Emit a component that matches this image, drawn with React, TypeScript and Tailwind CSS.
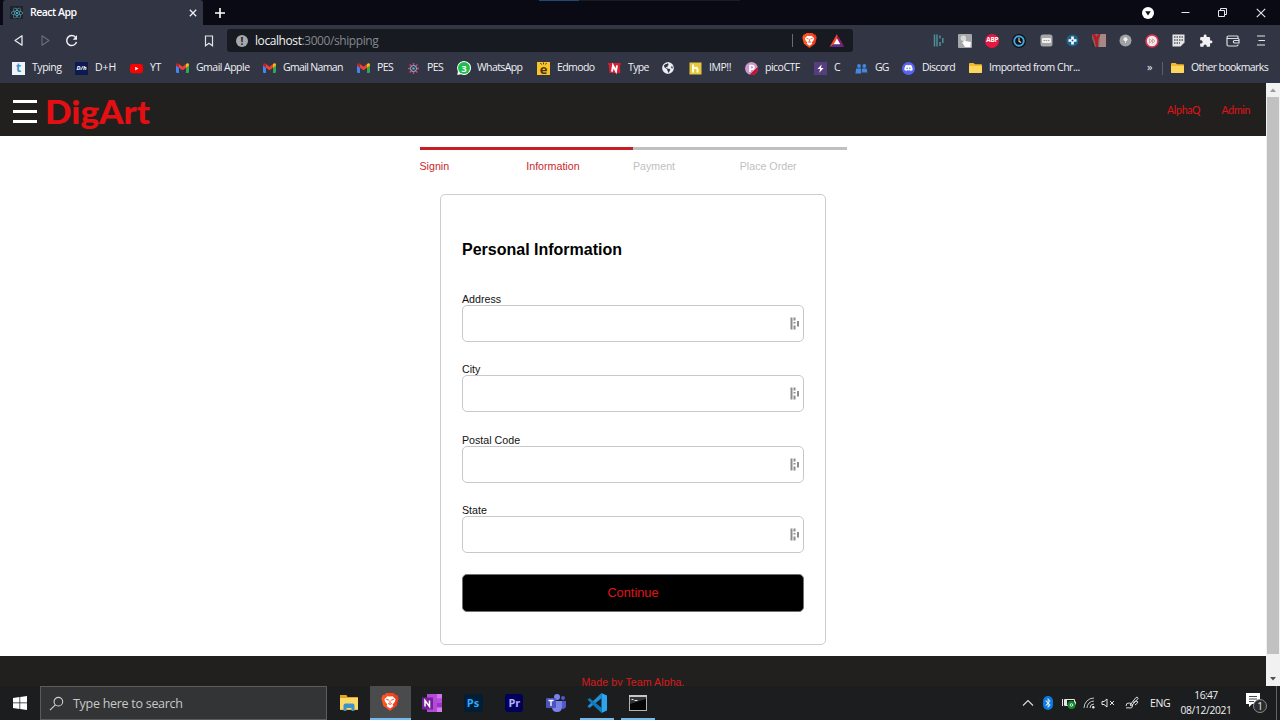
import React from 'react';
import { FaBluetoothB, FaDiscord, FaGlobeAmericas, FaReact } from 'react-icons/fa';

function BraveLogo({ className, gid }: { className: string; gid: string }) {
  return (
    <svg viewBox="0 0 24 24" className={className}>
      <defs>
        <linearGradient id={gid} x1="0" x2="1"><stop offset="0" stopColor="#ff5a22" /><stop offset="1" stopColor="#f0371b" /></linearGradient>
      </defs>
      <path d="M7 0h10l2.500 2.500 2-.3L23.500 7l-2.500 10-9 7L3 17 .5 7l2-4.800 2 .3z" fill={`url(#${gid})`} />
      <path d="M12 4.800l3.500-.6 4 4-1 3.300-3 3.700 1 2L12 20.500l-4.500-3.300 1-2-3-3.700-1-3.300 4-4z" fill="#fff" />
      <path d="M7 8.500l3.500 1.100M17 8.500l-3.500 1.100M12 10v4M9.500 14l2.500 1.200 2.500-1.200" stroke="#f0451f" strokeWidth="1.300" fill="none" />
    </svg>
  );
}

function Gmail() {
  return (
    <svg viewBox="0 0 24 18" className="h-[10px] w-[13px]">
      <path d="M0 3v13.500A1.500 1.500 0 0 0 1.500 18H5.500V8z" fill="#4285f4" />
      <path d="M24 3v13.500A1.500 1.500 0 0 1 22.500 18H18.500V8z" fill="#34a853" />
      <path d="M18.500 1.600V8.400L24 4.200V2.500c0-2-2.300-3.200-4-2z" fill="#fbbc04" />
      <path d="M5.500 8.400V1.600L12 6.500l6.500-4.900v6.800L12 13.200z" fill="#ea4335" />
      <path d="M0 2.500v1.700l5.500 4.200V1.600L4 .5C2.300-.7 0 .5 0 2.500z" fill="#c5221f" />
    </svg>
  );
}

function Folder() {
  return (
    <svg viewBox="0 0 13 12" className="h-[12px] w-[13px]">
      <path d="M0 2q0-1 1-1h3.500l1.500 1.300h6q1 0 1 1V10q0 1-1 1H1q-1 0-1-1z" fill="#f5b92c" />
      <path d="M0 4h13v6q0 1-1 1H1q-1 0-1-1z" fill="#ffd65c" />
    </svg>
  );
}

function Square({ className, children }: { className: string; children: React.ReactNode }) {
  return <span className={`flex h-[13px] w-[13px] items-center justify-center leading-none ${className}`}>{children}</span>;
}

type Mark = { w: string; label?: string; icon: React.ReactNode; t?: string };

const marks: Mark[] = [
  { w: 'w-[63px]', label: 'Typing', t: 'tracking-[-0.45px]', icon: <Square className="bg-[#eef4f8] text-[12px] font-bold text-[#3d94c9]">t</Square> },
  { w: 'w-[55px]', label: 'D+H', t: 'tracking-[-0.1px]', icon: <Square className="bg-[#0b1a52] text-[6px] font-bold italic text-white">D/h</Square> },
  {
    w: 'w-[46px]', label: 'YT', t: 'tracking-[-0.3px]', icon: (
      <svg viewBox="0 0 13 13" className="h-[13px] w-[13px]"><rect y="2" width="13" height="9.200" rx="2.400" fill="#f00" /><path d="M5.200 4.700v3.800l3.300-1.900z" fill="#fff" /></svg>
    ),
  },
  { w: 'w-[87px]', label: 'Gmail Apple', t: 'tracking-[-0.52px]', icon: <Gmail /> },
  { w: 'w-[94px]', label: 'Gmail Naman', t: 'tracking-[-0.66px]', icon: <Gmail /> },
  { w: 'w-[50px]', label: 'PES', t: 'tracking-[-0.6px]', icon: <Gmail /> },
  {
    w: 'w-[50px]', label: 'PES', t: 'tracking-[-0.6px]', icon: (
      <svg viewBox="0 0 13 13" className="h-[13px] w-[13px]">
        <path d="M6.500 1v11M1 6.500h11M2.600 2.600l7.800 7.800M10.400 2.600l-7.800 7.800" stroke="#c04a72" strokeWidth="1.400" />
        <circle cx="6.500" cy="6.500" r="3" fill="#27304a" stroke="#a9b9cb" /><circle cx="6.500" cy="6.500" r="1.300" fill="#6ba6c9" />
      </svg>
    ),
  },
  {
    w: 'w-[80px]', label: 'WhatsApp', t: 'tracking-[-0.6px]', icon: (
      <span className="relative flex h-[14px] w-[14px] items-center justify-center">
        <svg viewBox="0 0 14 14" className="h-[14px] w-[14px]"><path d="M7 0a7 7 0 1 1-3 13.300L.3 14l.6-3.700A7 7 0 0 1 7 0z" fill="#f4fff7" /><circle cx="7" cy="7" r="6" fill="#20bd4e" /></svg>
        <span className="absolute text-[9px] font-bold leading-none text-white">3</span>
      </span>
    ),
  },
  {
    w: 'w-[71px]', label: 'Edmodo', t: 'tracking-[-0.6px]', icon: (
      <span className="flex h-[13px] w-[13px] flex-col items-center bg-[#f9c32b] text-[#49360a]">
        <svg viewBox="0 0 13 3" className="h-[3px] w-[13px]"><path d="M3.500 1l1 1.500M6.500.5v1.800M9.500 1l-1 1.500" stroke="#49360a" /></svg>
        <span className="text-[13px] font-bold leading-[8px]">e</span>
      </span>
    ),
  },
  {
    w: 'w-[54px]', label: 'Type', t: 'tracking-[-0.65px]', icon: (
      <svg viewBox="0 0 13 13" className="h-[13px] w-[13px]"><path d="M0 1h13l-1 3 .3 7H1.500L1 5z" fill="#d61f32" /><path d="M4 9.700L5 3.500l3 5.700 1-5.900" stroke="#fff" strokeWidth="1.900" fill="none" /></svg>
    ),
  },
  { w: 'w-[27px]', icon: <FaGlobeAmericas className="h-[12px] w-[12px] text-[#eceef2]" /> },
  {
    w: 'w-[56px]', label: 'IMP!!', t: 'tracking-[-0.45px]', icon: (
      <svg viewBox="0 0 13 13" className="h-[13px] w-[13px]"><rect x=".5" y=".5" width="12" height="12" fill="#e6c83c" /><path d="M4 2.500v8M4 6.500q4.500-2 4.500 1v3" stroke="#fffbe0" strokeWidth="2" fill="none" /></svg>
    ),
  },
  {
    w: 'w-[69px]', label: 'picoCTF', t: 'tracking-[-0.5px]', icon: (
      <svg viewBox="0 0 13 13" className="h-[13px] w-[13px]"><circle cx="6.500" cy="6.500" r="6.500" fill="#c99acb" /><path d="M12.800 5A6.500 6.500 0 0 1 4.500 12.700z" fill="#c8102e" /><path d="M5 10V3.500h2a1.800 1.800 0 0 1 0 3.800H5" stroke="#fff" strokeWidth="1.600" fill="none" /></svg>
    ),
  },
  {
    w: 'w-[41px]', label: 'C', icon: (
      <svg viewBox="0 0 13 13" className="h-[13px] w-[13px]"><rect width="13" height="13" fill="#573d80" /><path d="M7.600 2.500L3.500 7h2.600l-.8 3.700L9.600 6H7z" fill="#fff" /></svg>
    ),
  },
  {
    w: 'w-[47px]', label: 'GG', t: 'tracking-[-0.9px]', icon: (
      <svg viewBox="0 0 13 13" className="h-[13px] w-[13px]" fill="#4287e0"><circle cx="4" cy="4" r="1.900" /><circle cx="9.300" cy="4" r="1.900" /><path d="M1.200 6.500h5v5h-5.800zM7 6.500h4.600l.8 4H7z" /></svg>
    ),
  },
  {
    w: 'w-[67px]', label: 'Discord', t: 'tracking-[-0.6px]', icon: (
      <span className="flex h-[13px] w-[13px] items-center justify-center rounded-full bg-[#5865f2]"><FaDiscord className="h-[8px] w-[9px] text-white" /></span>
    ),
  },
  { w: 'w-[120px]', label: 'Imported from Chr...', t: 'tracking-[-0.5px]', icon: <Folder /> },
];

function Bookmark({ mark }: { mark: Mark }) {
  return (
    <div className={`flex shrink-0 items-center gap-[6px] ${mark.w}`}>
      <span className="flex w-[14px] shrink-0 items-center">{mark.icon}</span>
      {mark.label && <span className={`whitespace-nowrap ${mark.t ?? ''}`}>{mark.label}</span>}
    </div>
  );
}

function TabStrip() {
  return (
    <div className="relative flex h-[25px] bg-[#090a14]">
      <div className="ml-[3px] flex w-[200px] items-center rounded-t-[3px] bg-[#323544] pl-[7px] pr-[5px]">
        <span className="flex h-[13px] w-[13px] items-center justify-center bg-[#20232a]"><FaReact className="h-[12px] w-[12px] text-[#5bb8cf]" /></span>
        <span className="ml-[7px] flex-1 text-[10.500px] font-semibold tracking-[-0.500px] text-white">React App</span>
        <svg viewBox="0 0 10 10" className="h-[10px] w-[10px]"><path d="M1.800 1.800l6.400 6.400M8.200 1.800L1.800 8.200" stroke="#eceef2" strokeWidth="1.300" /></svg>
      </div>
      <svg viewBox="0 0 12 12" className="ml-[11px] mt-[7px] h-[12px] w-[12px]"><path d="M6 1v10M1 6h10" stroke="#fff" strokeWidth="1.600" /></svg>
      <div className="absolute left-[539px] top-0 h-px w-[40px] bg-[#1c4a74]" />
      <div className="absolute left-[579px] top-0 h-px w-[161px] bg-[#1b1d24]" />
      <div className="ml-auto flex items-center pr-[14px]">
        <svg viewBox="0 0 12 12" className="h-[12px] w-[12px]"><circle cx="6" cy="6" r="6" fill="#fff" /><path d="M3.200 4.300h5.600L6 8.500z" fill="#101119" /></svg>
        <svg viewBox="0 0 9 9" className="ml-[27px] h-[9px] w-[9px]"><path d="M.5 4.500h8" stroke="#e6e7ea" /></svg>
        <svg viewBox="0 0 9 9" className="ml-[28px] h-[9px] w-[9px]"><path d="M.5 2.500h6v6h-6zM2.500 2.500V.5h6v6h-2" stroke="#e6e7ea" fill="none" /></svg>
        <svg viewBox="0 0 9 9" className="ml-[29px] h-[10px] w-[10px]"><path d="M.7.700l7.600 7.600M8.300.700L.700 8.300" stroke="#e6e7ea" /></svg>
      </div>
    </div>
  );
}

function Extensions() {
  return (
    <div className="ml-[79px] flex w-[334px] items-center justify-between">
      <svg viewBox="0 0 13 13" className="h-[13px] w-[13px]"><path d="M2.500 .5v12M5 .5v12M8 1.500v3M8 8v4M10.800 4v5" stroke="#4d9099" strokeWidth="1.500" /></svg>
      <svg viewBox="0 0 13 13" className="h-[14px] w-[14px]"><rect width="13" height="13" rx="1" fill="#a6a7a8" /><path d="M5 3v5l-1.500-.5L6.500 12h5l.5-4.500L7 6.500V3z" fill="#fff" /><circle cx="5" cy="4" r="2.500" fill="#d8d8d8" /></svg>
      <span className="flex h-[14px] w-[14px] items-center justify-center rounded-full bg-[#e8173f] text-[6.500px] font-bold leading-none tracking-[-0.3px] text-white">ABP</span>
      <svg viewBox="0 0 13 13" className="h-[14px] w-[14px]"><circle cx="6.500" cy="6.500" r="6.500" fill="#0b1016" /><circle cx="6.500" cy="6.500" r="4.400" stroke="#48a8dd" strokeWidth="1.800" fill="none" /><path d="M6.500 3.500v3.300l2 1" stroke="#ddd" fill="none" /></svg>
      <svg viewBox="0 0 13 13" className="h-[13px] w-[13px]"><rect x=".5" y=".5" width="12" height="12" rx="2.500" fill="#a5a6a8" /><rect x="2" y="4" width="9" height="5" rx="1" fill="#efefef" /><path d="M3.500 6.500h6" stroke="#999" strokeDasharray="1.500 .7" /></svg>
      <svg viewBox="0 0 13 13" className="h-[13px] w-[13px]"><circle cx="6.500" cy="6.500" r="6" fill="#1d638f" /><path d="M5.200 2.500h2.600v2.700h2.700v2.600H7.800v2.700H5.200V7.800H2.500V5.200h2.700z" fill="#fff" /><circle cx="6.500" cy="6.500" r="1" fill="#1d638f" /></svg>
      <svg viewBox="0 0 14 13" className="h-[13px] w-[14px]"><rect width="14" height="13" fill="#806165" /><path d="M8 0h6v13H7z" fill="#a98782" /><path d="M0 0h3l1.500 3 2-3h2L6 6v7H4L3 7z" fill="#b71925" /><path d="M0 4l3 9H0z" fill="#28343a" /></svg>
      <svg viewBox="0 0 13 13" className="h-[13px] w-[13px]"><circle cx="6.500" cy="6.500" r="6" fill="#a0a1a3" /><circle cx="6.500" cy="5.200" r="2" fill="#eee" /><path d="M6 7h1v2H6z" fill="#ddd" /></svg>
      <svg viewBox="0 0 14 14" className="h-[14px] w-[14px]"><circle cx="7" cy="7" r="6" fill="#f5e9eb" stroke="#dc3651" strokeWidth="1.600" /><path d="M4.500 4.800v4.400L7 7zM7.500 4.800v4.400L10 7z" fill="none" stroke="#b8a1a6" strokeWidth=".8" /></svg>
      <svg viewBox="0 0 13 13" className="h-[13px] w-[13px]"><path d="M.5.500h12v8l-4 4h-8z" fill="#e5e5e5" /><path d="M2 3h9M2 6h9M2 9h6" stroke="#555963" strokeWidth="1.500" strokeDasharray="1.500 1" /></svg>
      <svg viewBox="0 0 24 24" className="h-[14px] w-[14px]" fill="#f1f1f4"><path d="M20.500 11H19V7a2 2 0 0 0-2-2h-4V3.500a2.500 2.500 0 0 0-5 0V5H4a2 2 0 0 0-2 2v3.800h1.500a2.700 2.700 0 0 1 0 5.400H2V20a2 2 0 0 0 2 2h3.800v-1.500a2.700 2.700 0 0 1 5.400 0V22H17a2 2 0 0 0 2-2v-4h1.500a2.500 2.500 0 0 0 0-5z" /></svg>
      <svg viewBox="0 0 14 12" className="h-[12px] w-[14px]"><path d="M12 3V1.700Q12 1 11 1H2.500Q1 1 1 2.300V9.500Q1 11 2.500 11H10.500Q12 11 12 9.800V9.500M1 2.600Q1.300 3.500 2.500 3.500H12Q13 3.500 13 4.500V8H8.300a1.300 1.300 0 0 1 0-2.500H13" stroke="#dcdde2" strokeWidth="1.200" fill="none" /></svg>
      <svg viewBox="0 0 13 13" className="h-[13px] w-[13px]"><path d="M4 2h8M5.500 6.500H12M4 11h8" stroke="#e6e7ea" strokeWidth="1.200" /></svg>
    </div>
  );
}

function Toolbar() {
  return (
    <div className="flex h-[31px] items-center pl-[13px]">
      <svg viewBox="0 0 11 13" className="h-[13px] w-[11px]"><path d="M9 1.800v9.400L2 6.500z" stroke="#e8e9ee" strokeWidth="1.300" fill="none" strokeLinejoin="round" /></svg>
      <svg viewBox="0 0 11 13" className="ml-[16px] h-[13px] w-[11px]"><path d="M2 1.800v9.400l7-4.700z" stroke="#6c6f7b" strokeWidth="1.100" fill="none" strokeLinejoin="round" /></svg>
      <svg viewBox="0 0 13 13" className="ml-[14px] h-[13px] w-[13px]"><path d="M10.500 3.300A5 5 0 1 0 11.500 8" stroke="#eeeff3" strokeWidth="1.500" fill="none" /><path d="M12 1v4.700H7.800z" fill="#eeeff3" /></svg>
      <svg viewBox="0 0 10 12" className="ml-[126px] h-[12px] w-[10px]"><path d="M1.500 1h7v9.800L5 8.200l-3.500 2.600z" stroke="#e3e4ea" strokeWidth="1.200" fill="none" /></svg>
      <div className="ml-[13px] flex h-[23px] w-[626px] items-center rounded-[3px] bg-[#171a20] pl-[9px]">
        <span className="flex h-[12px] w-[12px] items-center justify-center rounded-full bg-[#a5a8ad] text-[10px] font-bold leading-none text-[#171a20]">!</span>
        <span className="ml-[7px] flex-1 text-[12px] tracking-[-0.420px] text-[#85888e]"><span className="text-[#f0f1f3]">localhost</span>:3000/shipping</span>
        <span className="h-[13px] w-px bg-[#686b72]" />
        <BraveLogo className="ml-[9px] h-[15px] w-[15px]" gid="shield-bar" />
        <svg viewBox="0 0 16 14" className="ml-[12px] mr-[8px] h-[13px] w-[16px]"><path d="M8 0L0 14l8-4.500z" fill="#ff4724" /><path d="M8 0l8 14-8-4.500z" fill="#8d1d6c" /><path d="M0 14h16l-8-4.500z" fill="#5a2a91" /><path d="M8 4.800L4.500 11h7z" fill="#fff" /></svg>
      </div>
      <Extensions />
    </div>
  );
}

function BookmarksBar() {
  return (
    <div className="flex h-[27px] items-center pb-[3px] pl-[12px] text-[10.500px] text-[#f0f1f4]">
      {marks.map((m, i) => <Bookmark key={i} mark={m} />)}
      <span className="ml-[58px] w-[15px] pb-[2px] text-[11px]">»</span>
      <span className="h-[13px] w-px bg-[#5b5f6e]" />
      <span className="ml-[8px] flex items-center gap-[7px] whitespace-nowrap tracking-[-0.610px]"><Folder />Other bookmarks</span>
    </div>
  );
}

function SiteHeader() {
  return (
    <header className="flex h-[53px] items-center bg-[#22201e] pl-[13px]">
      <div className="flex w-[24px] flex-col gap-[7px] pt-[3px]">
        <i className="h-[3px] bg-white" /><i className="h-[3px] bg-white" /><i className="h-[3px] bg-white" />
      </div>
      <span className="ml-[8px] mt-[6px] inline-block origin-left scale-x-[1.11] font-['Lato'] text-[31.500px] font-black leading-none text-[#e40f12]">DigArt</span>
      <nav className="ml-auto mr-[16px] mt-[2px] flex gap-[21.500px] font-['Lato'] text-[10.500px] text-[#e01316]"><span className="tracking-[-0.3px]">AlphaQ</span><span className="tracking-[-0.3px]">Admin</span></nav>
    </header>
  );
}

const steps = [
  { name: 'Signin', done: true },
  { name: 'Information', done: true },
  { name: 'Payment', done: false },
  { name: 'Place Order', done: false },
];

function Steps() {
  return (
    <div className="mt-[11px] grid w-[427px] grid-cols-4 text-[10.670px]">
      {steps.map((s) => (
        <div key={s.name} className={`border-t-[3px] pt-[9px] leading-[14px] ${s.done ? 'border-[#c72024] text-[#c9282c]' : 'border-[#c0c0c0] text-[#c0c0c0]'}`}>{s.name}</div>
      ))}
    </div>
  );
}

function Field({ label }: { label: string }) {
  return (
    <label className="mb-[20.300px] flex flex-col pt-px text-[10.670px] leading-[12px] text-[#111]">
      {label}
      <span className="flex h-[37px] items-center justify-end rounded-[5px] border border-[#c8c8c8] bg-white pr-[2px]">
        <svg viewBox="0 0 12 13" className="h-[13px] w-[12px]"><path d="M2.500 .5v12M5.500 .5v3M5.500 5v1.500M5.500 8.500v4M9 4v5.500" stroke="#8c8c8c" strokeWidth="2" /></svg>
      </span>
    </label>
  );
}

function Page() {
  return (
    <div className="flex h-[603px] w-[1266px] flex-col overflow-hidden bg-white font-['Liberation_Sans',sans-serif]">
      <SiteHeader />
      <main className="flex h-[520px] flex-col items-center">
        <Steps />
        <form className="mt-[21px] flex h-[451px] w-[386px] flex-col rounded-[5px] border border-[#cdcdcd] px-[21px]">
          <h1 className="mb-[32px] mt-[45px] text-[16px] font-bold leading-[20px] text-black">Personal Information</h1>
          <Field label="Address" />
          <Field label="City" />
          <Field label="Postal Code" />
          <Field label="State" />
          <button type="button" className="mt-[0.800px] h-[38px] rounded-[5px] border border-[#707070] bg-black pb-px text-[12.800px] text-[#e01517]">Continue</button>
        </form>
      </main>
      <footer className="flex h-[30px] justify-center bg-[#22201e] pt-[20px] text-[10.670px] leading-[12px] tracking-[0.050px] text-[#d51a1d]">Made by Team Alpha.</footer>
    </div>
  );
}

function Scrollbar() {
  return (
    <div className="flex w-[14px] flex-col items-center bg-[#f1f1f1]">
      <svg viewBox="0 0 14 14" className="h-[14px] w-[14px]"><path d="M4 9h6L7 5.500z" fill="#9a9a9a" /></svg>
      <div className="h-[557px] w-[12px] bg-[#c1c1c1]" />
      <svg viewBox="0 0 14 14" className="mt-auto h-[14px] w-[14px]"><path d="M4 5h6L7 8.500z" fill="#505050" /></svg>
    </div>
  );
}

function AppSlot({ children, className = '' }: { children: React.ReactNode; className?: string }) {
  return <div className={`flex h-full w-[41.300px] items-center justify-center ${className}`}>{children}</div>;
}

function Taskbar() {
  return (
    <div className="flex h-[34px] bg-[#1b1d1f]">
      <div className="flex w-[40px] items-center justify-center">
        <svg viewBox="0 0 14 14" className="h-[14px] w-[14px]" fill="#fff"><path d="M0 2l6.500-.9v5.500H0zM7.200 1L14 0v6.600H7.200zM0 7.300h6.500V13L0 12.100zM7.200 7.300H14V14l-6.800-1z" /></svg>
      </div>
      <div className="flex w-[287px] items-center border border-[#5c5c5c] bg-[#333435] pl-[8px]">
        <svg viewBox="0 0 16 16" className="h-[15px] w-[15px]"><circle cx="10" cy="6" r="4.600" stroke="#d0d0d0" strokeWidth="1.200" fill="none" /><path d="M6.800 9.500L1 15" stroke="#d0d0d0" strokeWidth="1.200" /></svg>
        <span className="ml-[9px] mt-[2px] text-[12.500px] tracking-[-0.280px] text-[#c9c9c9]">Type here to search</span>
      </div>
      <AppSlot className="ml-[1.500px]">
        <svg viewBox="0 0 18 16" className="h-[16px] w-[18px]"><path d="M0 0h6.500l1 2H18v13H0z" fill="#e4a619" /><path d="M0 3h18v11.500H0z" fill="#fbd96b" /><path d="M3.500 16v-5.500q0-2 2-2h7q2 0 2 2V16h-3v-3h-5v3z" fill="#3e94c8" /></svg>
      </AppSlot>
      <AppSlot className="border-b-2 border-[#76b9ed] bg-[#4a4b4c]"><BraveLogo className="h-[20px] w-[18px]" gid="shield-task" /></AppSlot>
      <AppSlot>
        <svg viewBox="0 0 20 18" className="h-[18px] w-[20px]"><path d="M5 0h15v18H5z" fill="#b54ad8" /><path d="M15 0h5v4.500h-5z" fill="#ce75ea" /><path d="M15 4.500h5V9h-5z" fill="#b94ddd" /><path d="M15 9h5v4.500h-5z" fill="#9638bd" /><path d="M15 13.500h5V18h-5z" fill="#d77df0" /><rect y="3.500" width="11" height="12" fill="#77209b" /><path d="M3 12.500V6.500l4.500 6v-6" stroke="#fff" strokeWidth="1.500" fill="none" /></svg>
      </AppSlot>
      <AppSlot><span className="flex h-[18px] w-[19px] items-center justify-center rounded-[3px] bg-[#001e36] pb-[2px] text-[11px] font-bold leading-none text-[#31a8ff]">Ps</span></AppSlot>
      <AppSlot><span className="flex h-[18px] w-[18px] items-center justify-center rounded-[3px] bg-[#00005b] pb-[2px] text-[11px] font-bold leading-none text-[#b7b0ff]">Pr</span></AppSlot>
      <AppSlot>
        <svg viewBox="0 0 20 18" className="h-[18px] w-[20px]"><circle cx="11" cy="3" r="3" fill="#7b83eb" /><circle cx="17" cy="4" r="2" fill="#5059c9" /><path d="M15 7h5v5q0 3-4 3z" fill="#5059c9" /><path d="M6 7h10v6q0 5-5 5t-5-5z" fill="#7b83eb" /><rect y="4" width="10" height="10" rx="1" fill="#4b53bc" /><path d="M2.500 6.500h5M5 6.500v5.500" stroke="#fff" strokeWidth="1.300" /></svg>
      </AppSlot>
      <AppSlot className="relative">
        <svg viewBox="0 0 20 20" className="h-[20px] w-[20px]"><path d="M14.500 0v5.300L2.500 15 .5 13.300z" fill="#1f8fd6" /><path d="M14.500 20v-5.300L2.500 5 .5 6.700z" fill="#0f78be" /><path d="M14.500 0l5.500 2.500v15L14.500 20z" fill="#2aa5f2" /></svg>
        <i className="absolute bottom-0 h-[2px] w-[34px] bg-[#76b9ed]" />
      </AppSlot>
      <AppSlot className="relative">
        <svg viewBox="0 0 18 16" className="h-[16px] w-[18px]"><rect x=".5" y=".5" width="17" height="15" fill="#050505" stroke="#b3b3b3" /><path d="M0 0h18v2H0z" fill="#c7c7c7" /><path d="M1 9L17 4v-2H1z" fill="#343434" /><path d="M2.500 4.500h2M5.500 5.500h3" stroke="#eee" /></svg>
        <i className="absolute bottom-0 h-[2px] w-[34px] bg-[#76b9ed]" />
      </AppSlot>
      <div className="ml-auto flex items-center text-[#f0f0f0]">
        <svg viewBox="0 0 12 8" className="h-[8px] w-[12px]"><path d="M1 6.500l5-5 5 5" stroke="#ddd" strokeWidth="1.100" fill="none" /></svg>
        <span className="ml-[9px] flex h-[14px] w-[10px] items-center justify-center rounded-[5px] bg-[#0a7be4]"><FaBluetoothB className="h-[10px] w-[8px]" /></span>
        <svg viewBox="0 0 14 12" className="ml-[9px] h-[12px] w-[14px]"><path d="M2.500 2.500h10v6h-10zM.5 2v7M13.500 4.500v3" stroke="#e6e6e6" fill="none" /><path d="M3 3h2v5H3z" fill="#e6e6e6" /><circle cx="9.500" cy="8" r="4" fill="#15862a" /><circle cx="9.500" cy="8" r="1.300" stroke="#d7f3d9" fill="none" /></svg>
        <svg viewBox="0 0 12 12" className="ml-[7px] h-[12px] w-[12px]"><path d="M1 11A10 10 0 0 1 11 1M4 11A7 7 0 0 1 11 4M7 11a4 4 0 0 1 4-4" stroke="#c8c8c8" fill="none" /><circle cx="10.300" cy="10.300" r="1.200" fill="#eee" /></svg>
        <svg viewBox="0 0 14 10" className="ml-[6px] h-[10px] w-[14px]"><path d="M1 3.500h2L6 1v8L3 6.500H1zM9 3l4 4M13 3L9 7" stroke="#e6e6e6" fill="none" /></svg>
        <svg viewBox="0 0 14 14" className="ml-[10px] h-[14px] w-[14px]"><path d="M5 9l6-7.500q2-1 2 1L6.500 10zM1 10q0-3.500 3.500-3t3 3-2.500 2-4 0M8 6.500q3-2 4.500-1T10 9" stroke="#dedede" fill="none" /></svg>
        <span className="ml-[11px] mt-[1px] w-[20px] text-[10.500px] tracking-[-0.4px]">ENG</span>
        <div className="ml-[9px] flex w-[54px] flex-col items-center text-[10.300px] leading-[15px]"><span className="tracking-[-0.6px]">16:47</span><span className="tracking-[-0.350px]">08/12/2021</span></div>
        <div className="relative ml-[13px] mr-[10px] h-[20px] w-[20px]">
          <svg viewBox="0 0 14 14" className="h-[14px] w-[14px]"><path d="M0 0h14v11H6l-3 3v-3H0z" fill="#fff" /><path d="M3 3.500h8M3 6h8M3 8.500h5" stroke="#333" strokeWidth=".9" /></svg>
          <span className="absolute left-[7px] top-[6px] flex h-[14px] w-[14px] items-center justify-center rounded-full border border-[#8b8b8b] bg-[#2b2b2b] text-[10px] leading-none">1</span>
        </div>
        <span className="mr-[3px] h-[34px] w-px bg-[#606264]" />
      </div>
    </div>
  );
}

export default function App() {
  return (
    <div className="h-[720px] w-[1280px] overflow-hidden bg-[#323544] font-['Open_Sans','Noto_Sans',sans-serif]">
      <TabStrip />
      <Toolbar />
      <BookmarksBar />
      <div className="flex">
        <Page />
        <Scrollbar />
      </div>
      <Taskbar />
    </div>
  );
}
